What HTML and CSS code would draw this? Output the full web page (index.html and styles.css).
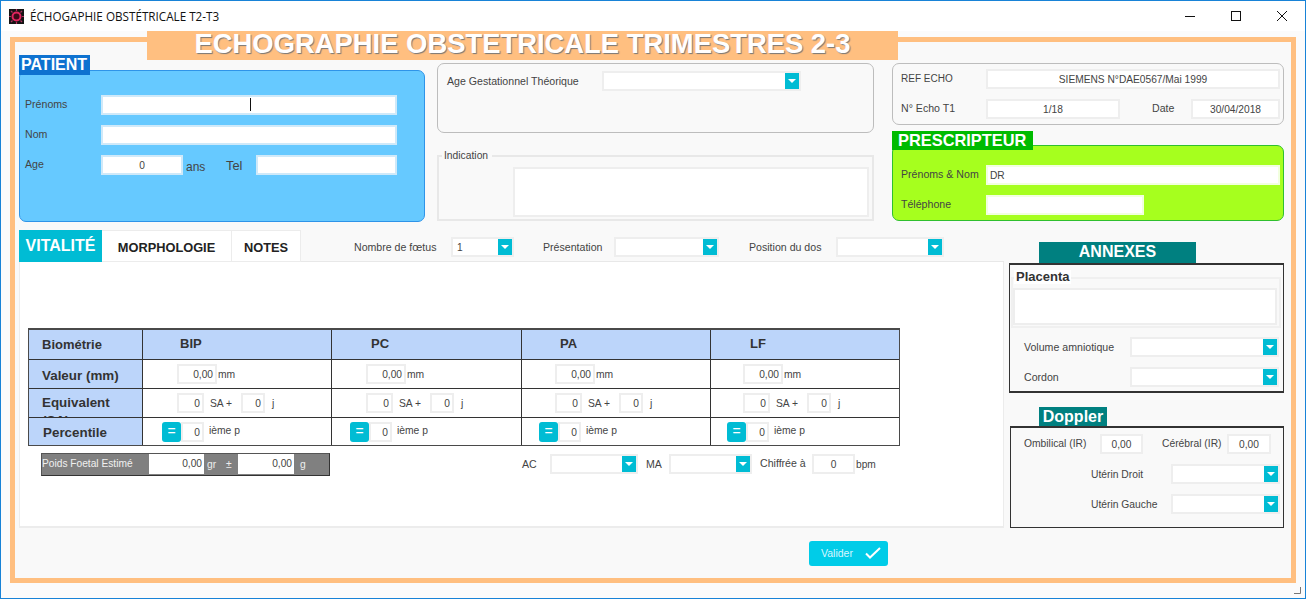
FILE: index.html
```html
<!DOCTYPE html>
<html lang="fr">
<head>
<meta charset="utf-8">
<title>ÉCHOGRAPHIE OBSTÉTRICALE T2-T3</title>
<link rel="stylesheet" href="styles.css">
</head>
<body>
<div class="window">
  <header class="titlebar">
    <svg class="app-icon" width="15" height="15" viewBox="0 0 15 15"><rect width="15" height="15" fill="#141414"/><circle cx="7.5" cy="7.5" r="4" fill="#3a0a18" stroke="#e0245e" stroke-width="2"/><path d="M7.5 0v2M7.500 13v2M0 7.500h2M13 7.500h2M2 2l1.500 1.500M11.500 11.500L13 13M13 2l-1.500 1.500M2 13l1.500-1.500" stroke="#b03060" stroke-width="1.200"/></svg>
    <span class="app-title">ÉCHOGAPHIE OBSTÉTRICALE T2-T3</span>
    <div class="win-controls">
      <svg width="10" height="10" viewBox="0 0 10 10"><path d="M0 5.500h10" stroke="#111" fill="none"/></svg>
      <svg width="10" height="10" viewBox="0 0 10 10"><rect x=".5" y=".5" width="9" height="9" stroke="#111" fill="none"/></svg>
      <svg width="10" height="10" viewBox="0 0 10 10"><path d="M0 0l10 10M10 0L0 10" stroke="#111" fill="none"/></svg>
    </div>
  </header>

  <main class="frame">
    <h1 class="banner">ECHOGRAPHIE OBSTETRICALE TRIMESTRES 2-3</h1>

    <section class="top">
      <div class="col-patient">
        <div class="tag tag-blue">PATIENT</div>
        <div class="panel panel-blue">
          <div class="row r-prenoms"><span class="lbl up w76">Prénoms</span><div class="field on-color f-wide"><i class="caret"></i></div></div>
          <div class="row"><span class="lbl up w76">Nom</span><div class="field on-color f-wide"></div></div>
          <div class="row">
            <span class="lbl up w76">Age</span>
            <div class="field on-color f-age center">0</div>
            <span class="big ans">ans</span>
            <span class="big tel">Tel</span>
            <div class="field on-color f-tel"></div>
          </div>
        </div>
      </div>

      <div class="col-mid">
        <div class="box box-age">
          <span class="lbl w155">Age Gestationnel Théorique</span>
          <div class="select s-age"><b class="arrow"></b></div>
        </div>
        <fieldset class="indication">
          <legend>Indication</legend>
          <div class="field f-indic"></div>
        </fieldset>
      </div>

      <div class="col-right">
        <div class="box box-ref">
          <div class="row"><span class="lbl up tight w85">REF ECHO</span><div class="field f-ref center">SIEMENS N°DAE0567/Mai 1999</div></div>
          <div class="row r-echo">
            <span class="lbl up w85">N° Echo T1</span>
            <div class="field f-echo center">1/18</div>
            <span class="lbl up date">Date</span>
            <div class="field f-date center">30/04/2018</div>
          </div>
        </div>
        <div class="tag tag-green">PRESCRIPTEUR</div>
        <div class="panel panel-green">
          <div class="row"><span class="lbl up w85">Prénoms &amp; Nom</span><div class="field on-green f-ref">DR</div></div>
          <div class="row r-tel"><span class="lbl up w85">Téléphone</span><div class="field on-green f-phone"></div></div>
        </div>
      </div>
    </section>

    <section class="bottom">
      <div class="col-tabs">
        <div class="tabbar">
          <div class="tab active">VITALITÉ</div>
          <div class="tab t-morpho">MORPHOLOGIE</div>
          <div class="tab t-notes">NOTES</div>
          <span class="lbl ctl-foetus">Nombre de fœtus</span>
          <div class="select s-foetus">1<b class="arrow"></b></div>
          <span class="lbl ctl-pres">Présentation</span>
          <div class="select s-pres"><b class="arrow"></b></div>
          <span class="lbl ctl-dos">Position du dos</span>
          <div class="select s-dos"><b class="arrow"></b></div>
        </div>
        <div class="pane">
          <div class="biometrie">
            <div class="cell head first">Biométrie</div>
            <div class="cell head h1">BIP</div>
            <div class="cell head h2">PC</div>
            <div class="cell head h3">PA</div>
            <div class="cell head h4">LF</div>

            <div class="cell side first s-val">Valeur (mm)</div>
            <div class="cell val c1"><div class="field f-val">0,00</div><span class="unit">mm</span></div>
            <div class="cell val c2"><div class="field f-val">0,00</div><span class="unit">mm</span></div>
            <div class="cell val c3"><div class="field f-val">0,00</div><span class="unit">mm</span></div>
            <div class="cell val c4"><div class="field f-val">0,00</div><span class="unit">mm</span></div>

            <div class="cell side first clip"><span>Equivalent<br>(SA)</span></div>
            <div class="cell val c1"><div class="field f-sa">0</div><span class="sa">SA +</span><div class="field f-j">0</div><span class="jour">j</span></div>
            <div class="cell val c2"><div class="field f-sa">0</div><span class="sa">SA +</span><div class="field f-j">0</div><span class="jour">j</span></div>
            <div class="cell val c3"><div class="field f-sa">0</div><span class="sa">SA +</span><div class="field f-j">0</div><span class="jour">j</span></div>
            <div class="cell val c4"><div class="field f-sa">0</div><span class="sa">SA +</span><div class="field f-j">0</div><span class="jour">j</span></div>

            <div class="cell side first s-pct">Percentile</div>
            <div class="cell pct c1"><div class="eq">=</div><div class="field f-pct">0</div><span class="ieme">ième p</span></div>
            <div class="cell pct c2"><div class="eq">=</div><div class="field f-pct">0</div><span class="ieme">ième p</span></div>
            <div class="cell pct c3"><div class="eq">=</div><div class="field f-pct">0</div><span class="ieme">ième p</span></div>
            <div class="cell pct c4"><div class="eq">=</div><div class="field f-pct">0</div><span class="ieme">ième p</span></div>
          </div>

          <div class="under">
            <div class="poids">
              <span class="p-label">Poids Foetal Estimé</span>
              <div class="p-field">0,00</div>
              <span class="p-gr">gr</span>
              <span class="p-pm">±</span>
              <div class="p-field p-second">0,00</div>
              <span class="p-g">g</span>
            </div>
            <span class="lbl ac">AC</span>
            <div class="select s-ac"><b class="arrow"></b></div>
            <span class="lbl ma">MA</span>
            <div class="select s-ma"><b class="arrow"></b></div>
            <span class="lbl chiffree">Chiffrée à</span>
            <div class="field f-bpm center">0</div>
            <span class="lbl bpm">bpm</span>
          </div>
        </div>
        <button class="valider" type="button"><span>Valider</span>
          <svg width="16" height="12" viewBox="0 0 16 12"><path d="M1 6.500l4 4L15 1" fill="none" stroke="#fff" stroke-width="2"/></svg>
        </button>
      </div>

      <aside class="col-annex">
        <div class="tag tag-teal tag-annexes">ANNEXES</div>
        <div class="annex-box">
          <fieldset class="placenta">
            <legend>Placenta</legend>
            <div class="field f-placenta"></div>
          </fieldset>
          <div class="row r-vol"><span class="lbl w106">Volume amniotique</span><div class="select s-annex"><b class="arrow"></b></div></div>
          <div class="row r-cord"><span class="lbl w106">Cordon</span><div class="select s-annex"><b class="arrow"></b></div></div>
        </div>
        <div class="tag tag-teal tag-doppler">Doppler</div>
        <div class="doppler-box">
          <div class="row r-omb">
            <span class="lbl up w76b">Ombilical (IR)</span>
            <div class="field f-ir center">0,00</div>
            <span class="lbl up cereb">Cérébral (IR)</span>
            <div class="field f-ir f-ir2 center">0,00</div>
          </div>
          <div class="row r-ut"><span class="lbl ut">Utérin Droit</span><div class="select s-ut"><b class="arrow"></b></div></div>
          <div class="row r-ut"><span class="lbl ut">Utérin Gauche</span><div class="select s-ut"><b class="arrow"></b></div></div>
        </div>
      </aside>
    </section>
  </main>
  <svg class="grip" width="7" height="7" viewBox="0 0 7 7"><path d="M6.500 0v6.500H0" fill="none" stroke="#777"/></svg>
</div>
</body>
</html>
```
FILE: styles.css
```css
* { box-sizing: border-box; }
html, body { margin: 0; padding: 0; }
body { font-family: "Liberation Sans", Arial, sans-serif; font-size: 10.300px; color: #444; background: #fafafa; overflow: hidden; }

.window { position: relative; width: 1306px; height: 599px; border: 1px solid #1883d7; background: #fbfbfb; overflow: hidden; }

.titlebar { height: 30px; background: #fff; display: flex; align-items: center; padding-left: 8px; }
.app-icon { flex: none; }
.app-title { margin-left: 6px; font: 11.700px "Open Sans", sans-serif; color: #111; }
.win-controls { margin-left: auto; display: flex; gap: 36px; padding-right: 18px; }
.win-controls svg { display: block; }

.frame { width: 1286px; height: 546px; margin: 6px 0 0 9px; border: 5px solid #ffbf80; background: #f9f9f9; padding-left: 4px; }
.banner { width: 751px; height: 29px; margin: -11px 0 -5px 128px; background: #ffbf80; color: #fff; font-size: 27.400px; font-weight: 700; line-height: 26px; text-align: center; text-shadow: 1px 1px 1px #777; }

.top { display: flex; height: 167px; }
.col-patient { width: 406px; }
.col-mid { width: 437px; margin-left: 12px; padding-top: 8px; }
.col-right { width: 392px; margin-left: 18px; padding-top: 8px; }

.tag { position: relative; z-index: 1; color: #fff; font-weight: 700; }
.tag-blue { width: 71px; height: 20px; margin-bottom: -5px; background: #0e72d0; font-size: 16px; line-height: 19px; padding-left: 2px; }
.tag-green { width: 141px; height: 19px; margin-top: 6px; margin-bottom: -5px; background: #00bb00; font-size: 16.400px; line-height: 19px; padding-left: 6px; }
.tag-teal { background: #008080; text-align: center; }

.panel { border-radius: 7px; border: 1px solid; }
.panel-blue { height: 152px; background: #66c9ff; border-color: #2f94e8; padding-top: 24px; }
.panel-green { height: 76px; background: #a6ff1e; border-color: #2fc02f; padding-top: 19px; }

.row { display: flex; align-items: center; }
.panel-blue .row { height: 20px; margin-bottom: 10px; padding-left: 5px; }
.lbl { flex: none; white-space: nowrap; color: #444; font-size: 10.600px; }
.up { margin-top: -2px; }
.tight { font-size: 10px; }
.w76 { width: 76px; }
.w85 { width: 85px; }
.w155 { width: 155px; }
.w106 { width: 106px; }
.w76b { width: 76px; }

.field { flex: none; height: 20px; background: #fff; border: 2px solid #eeeeee; font-size: 10.200px; line-height: 17px; color: #444; text-align: right; padding: 0 2px; position: relative; }
.center { text-align: center; }
.on-color { border-color: #cfe9f9; }
.on-green { border-color: #f2ffdf; text-align: left; padding-left: 2px; }
.f-wide { width: 296px; }
.f-age { width: 82px; }
.f-tel { width: 141px; }
.big { font-size: 12px; color: #444; line-height: 14px; }
.ans { margin: 3px 0 0 3px; width: 40px; }
.tel { width: 30px; margin-top: 1px; font-size: 12.800px; }
.caret { display: block; width: 1px; height: 13px; background: #111; margin: 1px 0 0 145px; }

.box { border: 1px solid #bdbdbd; border-radius: 7px; }
.box-age { height: 70px; display: flex; align-items: flex-start; padding: 7px 0 0 9px; }
.box-age .lbl { margin-top: 4px; }
.s-age { width: 199px; }

.select { flex: none; height: 20px; background: #fff; border: 2px solid #eee; display: flex; align-items: center; justify-content: space-between; padding-left: 4px; font-size: 10.200px; color: #444; }
.arrow { flex: none; margin-left: auto; width: 14px; height: 16px; background: #00bcd4; display: flex; align-items: center; justify-content: center; }
.arrow::after { content: ""; display: block; width: 0; height: 0; border-left: 4px solid transparent; border-right: 4px solid transparent; border-top: 4px solid #fff; }

.indication { margin: 22px 0 0; padding: 0 3px 2px 74px; height: 66px; border: 2px solid #e8e8e8; border-radius: 0; min-width: 0; position: relative; }
.indication legend { padding: 0 4px 0 2px; margin-left: 3px; font-size: 10.300px; color: #444; line-height: 12px; position: absolute; top: -7px; left: 0; background: #f9f9f9; }
.f-indic { width: 356px; height: 50px; margin-top: 10px; }

.box-ref { height: 62px; padding: 5px 3px 0 8px; }
.r-echo { margin-top: 10px; }
.f-ref { width: 294px; }
.f-echo { width: 134px; }
.date { margin-left: 32px; width: 39px; }
.f-date { width: 89px; }
.panel-green .row { padding-left: 8px; }
.r-tel { margin-top: 10px; }
.f-phone { width: 158px; }

.bottom { display: flex; height: 352px; margin-top: 8px; }
.col-tabs { width: 985px; flex: none; }
.tabbar { height: 33px; display: flex; align-items: flex-start; border-bottom: 2px solid #e8e8e8; }
.tab { flex: none; height: 32px; background: #fff; border: 1px solid #ececec; border-left: none; color: #222; font-size: 12.800px; font-weight: 700; line-height: 34px; text-align: center; }
.active { width: 83px; background: #00bcd4; border: none; color: #fff; font-size: 16px; line-height: 32px; }
.t-morpho { width: 130px; }
.t-notes { width: 69px; }
.tabbar .lbl { line-height: 34px; }
.tabbar .select { margin-top: 7px; }
.ctl-foetus { margin-left: 53px; width: 97px; }
.s-foetus { width: 63px; }
.ctl-pres { margin-left: 29px; width: 71px; }
.s-pres { width: 105px; }
.ctl-dos { margin-left: 30px; width: 87px; }
.s-dos { width: 108px; }

.pane { height: 266px; margin-top: -1px; background: #fff; border: 2px solid #ececec; border-top: none; border-right-width: 1px; border-left-width: 1px; padding: 66px 0 0 8px; }

.biometrie { width: 872px; height: 118px; display: grid; grid-template-columns: 113px 189px 190px 189px 189px; grid-template-rows: 29px 29px 29px 28px; border: 1px solid #4a4a4a; border-top-width: 2px; }
.cell { display: flex; align-items: center; border-left: 1px solid #333; border-top: 1px solid #333; min-width: 0; overflow: hidden; background: #fff; }
.cell.first { border-left: none; }
.head { border-top: none; background: #bcd5fa; font-size: 13px; font-weight: 700; color: #333; padding-bottom: 2px; }
.side { background: #bcd5fa; font-size: 13.400px; font-weight: 700; color: #333; padding-left: 13px; line-height: 16px; }
.head.first { padding-left: 13px; padding-bottom: 0; }
.h1 { padding-left: 37px; }
.h2 { padding-left: 39px; }
.h3 { padding-left: 38px; }
.h4 { padding-left: 39px; }
.s-val { padding-top: 3px; }
.s-pct { padding: 2px 0 0 14px; }
.clip { align-items: flex-start; padding-top: 5px; line-height: 18px; }
.clip span { display: block; }

.val.c1 { padding-left: 34px; }
.val.c2 { padding-left: 34px; }
.val.c3 { padding-left: 33px; }
.val.c4 { padding-left: 32px; }
.pct.c1 { padding-left: 19px; }
.pct.c2 { padding-left: 18px; }
.pct.c3 { padding-left: 17px; }
.pct.c4 { padding-left: 16px; }
.f-val { width: 40px; }
.unit { margin-left: 1px; }
.f-sa { width: 27px; }
.sa { width: 37px; padding-left: 6px; }
.f-j { width: 24px; }
.jour { margin-left: 7px; }
.eq { flex: none; width: 19px; height: 20px; background: #00bcd4; color: #fff; border-radius: 3px; font-size: 14px; line-height: 19px; text-align: center; }
.f-pct { width: 23px; }
.ieme { margin: -3px 0 0 5px; }

.under { display: flex; align-items: center; height: 24px; margin-top: 6px; }
.poids { flex: none; width: 289px; height: 23px; margin-left: 13px; background: #808080; border: 1px solid #808080; border-right-color: #333; border-bottom-color: #333; border-top-color: #555; border-left-color: #555; display: flex; align-items: center; color: #eee; }
.p-label { width: 107px; white-space: nowrap; font-size: 10.200px; color: #f0f0f0; margin-top: -2px; }
.p-field { flex: none; width: 55px; height: 20px; background: #fff; color: #444; text-align: right; font-size: 10.200px; line-height: 20px; padding-right: 2px; }
.p-second { width: 56px; }
.p-gr { width: 22px; padding-left: 3px; }
.p-pm { width: 12px; }
.p-g { padding-left: 6px; }

.ac { margin-left: 192px; width: 28px; }
.s-ac { width: 88px; }
.ma { margin-left: 8px; width: 23px; }
.s-ma { width: 83px; }
.chiffree { margin-left: 8px; width: 52px; margin-top: -3px; }
.f-bpm { width: 43px; }
.bpm { margin-left: 1px; font-size: 10.200px; }

.valider { display: flex; align-items: center; justify-content: space-between; width: 79px; height: 25px; margin: 13px 0 0 790px; padding: 0 7px 2px 12px; border: none; border-radius: 3px; background: #00cce8; color: #d8f6ff; font: 10.500px "Liberation Sans", sans-serif; }

.col-annex { width: 275px; margin-left: 5px; padding-top: 12px; }
.tag-annexes { width: 157px; height: 21px; margin-left: 30px; font-size: 16px; line-height: 20px; }
.annex-box { height: 130px; border: 1px solid #333; border-top-width: 2px; border-bottom-width: 2px; position: relative; padding: 12px 2px 0 1px; }
.placenta { height: 51px; margin: 0; padding: 9px 2px 0 0; border: 2px solid #f0f0f0; min-width: 0; position: relative; }
.placenta legend { position: absolute; top: -9px; left: 1px; padding: 0 2px; margin: 0; font-size: 13px; font-weight: 700; line-height: 14px; color: #333; background: #fff; }
.f-placenta { width: 264px; height: 37px; }
.r-vol { margin-top: 9px; padding-left: 13px; }
.r-cord { margin-top: 10px; padding-left: 13px; }
.s-annex { width: 149px; }
.tag-doppler { width: 68px; height: 19px; margin: 14px 0 0 30px; font-size: 16px; line-height: 19px; }
.doppler-box { height: 102px; margin-left: 1px; border: 1px solid #333; border-width: 2px 1px 1px; padding: 6px 2px 0 13px; }
.doppler-box .lbl { font-size: 10.300px; }
.r-omb { height: 20px; }
.f-ir { width: 43px; text-align: center; }
.f-ir2 { width: 44px; }
.cereb { margin-left: 19px; width: 65px; }
.r-ut { margin-top: 10px; padding-left: 67px; }
.ut { width: 80px; }
.s-ut { width: 109px; }

.grip { position: absolute; right: 4px; bottom: 4px; }
```
